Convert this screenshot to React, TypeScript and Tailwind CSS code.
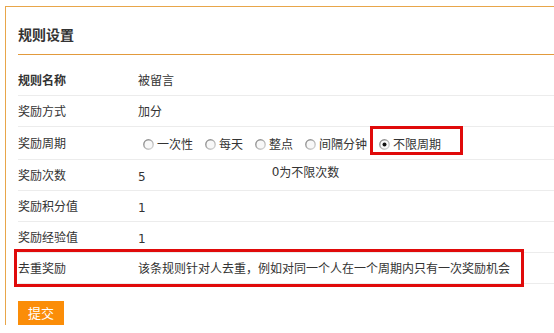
import React from "react";

const font = { fontFamily: '"Noto Sans CJK SC", "DejaVu Sans", sans-serif' };

function Radio({ checked }: { checked?: boolean }) {
  return (
    <svg width="11" height="11" viewBox="0 0 11 11" className="shrink-0">
      <defs>
        <linearGradient id={checked ? "rg1" : "rg0"} x1="0" y1="0" x2="1" y2="1">
          <stop offset="0" stopColor="#7e7e7e" />
          <stop offset="1" stopColor="#dcdcdc" />
        </linearGradient>
      </defs>
      <circle cx="5.5" cy="5.5" r="4.7" fill="#f8f8f8" stroke={checked ? "url(#rg1)" : "url(#rg0)"} strokeWidth="1.4" />
      {checked && <circle cx="5.5" cy="5.5" r="2" fill="#111" />}
    </svg>
  );
}

function Row({ label, bold, h, children }: { label: string; bold?: boolean; h: string; children?: React.ReactNode }) {
  return (
    <div className={`flex items-center border-b border-[#ececec] ${h}`}>
      <div className={`w-[120px] shrink-0 text-[12px] leading-[16px] text-[#333] ${bold ? "font-bold" : ""}`}>{label}</div>
      <div className="flex flex-1 items-center text-[12px] leading-[16px] text-[#333]">{children}</div>
    </div>
  );
}

export default function App() {
  const opts = ["一次性", "每天", "整点", "间隔分钟", "不限周期"];
  return (
    <div className="relative h-[333px] w-[554px] overflow-hidden bg-white" style={font}>
      <div className="ml-[5px] mt-[6px] border-l border-t border-[#e8a64a] pl-[12px]">
        <div className="h-[48px] border-b border-[#e29a3c] pt-[19px]">
          <div className="text-[14px] font-bold leading-[16px] text-[#333]">规则设置</div>
        </div>
        <div className="mt-[9px]">
          <Row label="规则名称" bold h="h-[32px]">
            被留言
          </Row>
          <Row label="奖励方式" h="h-[31px]">
            加分
          </Row>
          <Row label="奖励周期" h="h-[33px]">
            <div className="ml-[5px] flex items-center gap-[12px] pt-[2px]">
              {opts.map((o, i) => (
                <div key={o} className="flex items-center gap-[3px]">
                  <Radio checked={i === 4} />
                  <span>{o}</span>
                </div>
              ))}
            </div>
          </Row>
          <Row label="奖励次数" h="h-[31px]">
            <span className="pt-[3px] text-[12px]" style={{ fontFamily: '"DejaVu Sans", sans-serif' }}>5</span>
            <span className="ml-[126px] -mt-[6px] flex items-center">
              <span style={{ fontFamily: '"DejaVu Sans", sans-serif' }}>0</span>为不限次数
            </span>
          </Row>
          <Row label="奖励积分值" h="h-[31px]">
            <span className="pt-[4px]" style={{ fontFamily: '"DejaVu Sans", sans-serif' }}>1</span>
          </Row>
          <Row label="奖励经验值" h="h-[31px]">
            <span className="pt-[4px]" style={{ fontFamily: '"DejaVu Sans", sans-serif' }}>1</span>
          </Row>
          <Row label="去重奖励" h="h-[31px]">
            该条规则针对人去重，例如对同一个人在一个周期内只有一次奖励机会
          </Row>
        </div>
        <button className="mt-[17px] flex h-[24px] w-[46px] items-center justify-center bg-[#fb8d08] text-[13px] leading-[16px] text-white">
          提交
        </button>
      </div>
      <div className="pointer-events-none absolute left-[370px] top-[126px] h-[29px] w-[93px] border-[3px] border-[#e00a0a]" />
      <div className="pointer-events-none absolute left-[14px] top-[249px] h-[38px] w-[510px] border-[3px] border-[#e00a0a]" />
    </div>
  );
}
